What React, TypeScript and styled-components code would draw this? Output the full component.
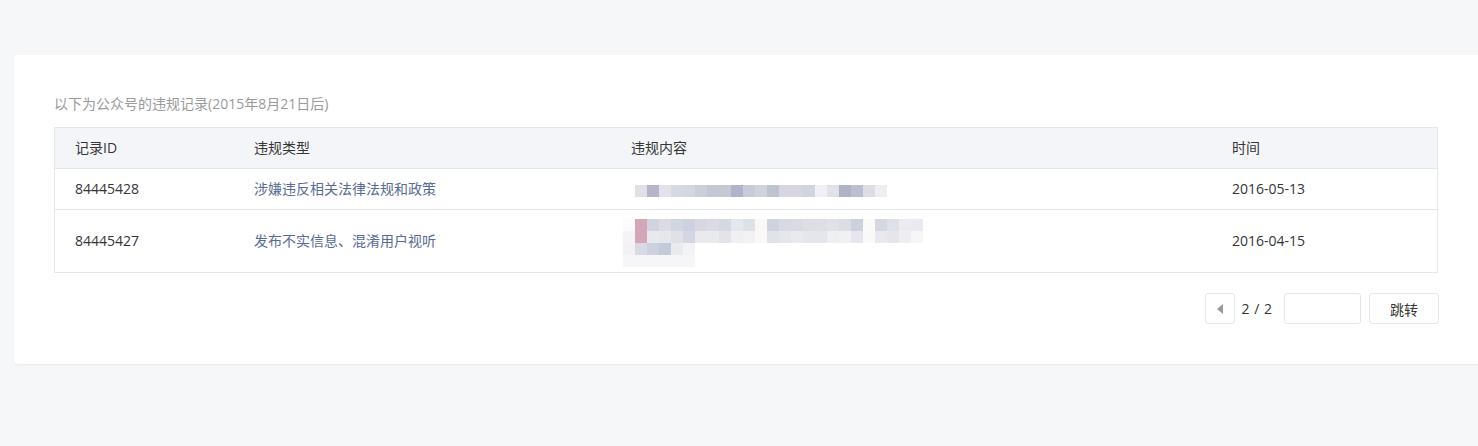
import React, { type FC } from 'react'
import styled, { createGlobalStyle } from 'styled-components'

const GlobalStyle = createGlobalStyle`
  html, body {
    margin: 0;
    padding: 0;
    background: #f6f7f9;
    overflow: hidden;
  }
  body {
    font-family: "Open Sans", "Noto Sans CJK SC", sans-serif;
    font-size: 14px;
    color: #353535;
  }
`

interface ViolationRecord {
  id: string
  type: string
  mosaic: string[][]
  date: string
}

// pixelated (blurred) content, one array per line, one colour per 12px cell
const records: ViolationRecord[] = [
  {
    id: '84445428',
    type: '涉嫌违反相关法律法规和政策',
    mosaic: [
      ['#fff', '#e0e0e6', '#b4b5ca', '#e2e3ea', '#d6d8e3', '#d5d6df', '#cbcfdc', '#c4c8d6', '#c5c9d3', '#afb4ca', '#c9cbd8', '#d1d3db', '#bdc4d1', '#d5d6e0', '#d5d6e0', '#d1d3de', '#f0f1f5', '#e2e1e7', '#afb2c7', '#bbc0d1', '#dcdde5', '#eeeef2']
    ],
    date: '2016-05-13'
  },
  {
    id: '84445427',
    type: '发布不实信息、混淆用户视听',
    mosaic: [
      ['#fbfbfc', '#d4a7b8', '#d2d3de', '#dadbe3', '#d1d5e1', '#cdd1df', '#d8d8e2', '#dadbe4', '#d6d8e2', '#e5e7ee', '#dfe1e9', '#faf8f6', '#d0d3de', '#d8dae3', '#dadae3', '#dcdde5', '#dedfe6', '#e1e2e9', '#dbdde5', '#cdd1dd', '#fafafa', '#d5d8e2', '#e0e1e8', '#ececf0', '#e9eaef'],
      ['#f4f4f6', '#d4a7b8', '#e8e8ee', '#e6e7ec', '#e0e1e8', '#d3d7e3', '#e9e9ee', '#e9eaee', '#e3e4ea', '#f0f0f4', '#f2f2f5', '#faf9f8', '#e0e3ea', '#e4e6ec', '#e9e9ee', '#e5e6eb', '#e5e6eb', '#eeeff3', '#f1f1f3', '#e6e7ed', '#f9f9f9', '#e8e8ee', '#e5e5eb', '#eeeef2', '#f6f6f8'],
      ['#f2f2f4', '#d8dbe5', '#cdd0dd', '#c5cad8', '#eaebef', '#f3f3f5'],
      ['#f6f6f8', '#f6f6f8', '#f6f6f8', '#f6f6f8', '#f6f6f8', '#f6f6f8']
    ],
    date: '2016-04-15'
  }
]

const App: FC = () => {
  return <Page>
    <GlobalStyle />
    <Card>
      <Caption>以下为公众号的违规记录(2015年8月21日后)</Caption>
      <Table>
        <HeaderRow>
          <Cell>记录ID</Cell>
          <Cell>违规类型</Cell>
          <Cell>违规内容</Cell>
          <Cell>时间</Cell>
        </HeaderRow>
        {records.map((record) => (
          <Row key={record.id}>
            <Cell>{record.id}</Cell>
            <Cell $link>{record.type}</Cell>
            <Cell>
              <Mosaic>
                {record.mosaic.map((line, i) => (
                  <MosaicLine key={i}>
                    {line.map((color, j) => <MosaicCell key={j} $color={color} />)}
                  </MosaicLine>
                ))}
              </Mosaic>
            </Cell>
            <Cell>{record.date}</Cell>
          </Row>
        ))}
      </Table>
      <Pager>
        <PrevButton type="button" aria-label="上一页">
          <svg width="8" height="10" viewBox="0 0 8 10">
            <path d="M7 0 L1 5 L7 10 Z" fill="#9a9a9a" />
          </svg>
        </PrevButton>
        <PageNum>2 / 2</PageNum>
        <PageInput type="text" />
        <JumpButton type="button">跳转</JumpButton>
      </Pager>
    </Card>
  </Page>
}

const Page = styled.div`
  padding: 55px 0 80px 14px;
`

const Card = styled.div`
  background: #fff;
  border-radius: 4px 0 0 4px;
  box-shadow: 0 1px 2px rgba(0, 0, 0, 0.05);
  padding: 39px 40px 40px 40px;
  margin-right: -4px;
`

const Caption = styled.p`
  margin: 0 0 13px;
  line-height: 20px;
  color: #9a9a9a;
`

const Table = styled.div`
  border: 1px solid #e4e8eb;
  width: 1382px;
`

const HeaderRow = styled.div`
  display: grid;
  grid-template-columns: 179px 377px 601px 1fr;
  align-items: center;
  height: 40px;
  background: #f4f5f9;
  border-bottom: 1px solid #e4e8eb;
`

const Row = styled.div`
  display: grid;
  grid-template-columns: 179px 377px 601px 1fr;
  align-items: center;
  min-height: 40px;
  border-bottom: 1px solid #e4e8eb;
  &:last-child {
    border-bottom: none;
  }
`

const Cell = styled.div<{ $link?: boolean }>`
  padding: 0 20px;
  line-height: 20px;
  color: ${({ $link }) => ($link ? '#576b95' : '#353535')};
`

const Mosaic = styled.div`
  display: flex;
  flex-direction: column;
  padding: 9px 0 5px;
  margin-left: -8px;
`

const MosaicLine = styled.div`
  display: flex;
  height: 12px;
`

const MosaicCell = styled.span<{ $color: string }>`
  width: 12px;
  height: 12px;
  background: ${({ $color }) => $color};
`

const Pager = styled.div`
  display: flex;
  justify-content: flex-end;
  align-items: center;
  margin-top: 20px;
  width: 1385px;
`

const PrevButton = styled.button`
  display: flex;
  align-items: center;
  justify-content: center;
  width: 30px;
  height: 31px;
  padding: 0;
  background: #fff;
  border: 1px solid #e4e8eb;
  border-radius: 3px;
`

const PageNum = styled.span`
  margin: 0 12px 0 7px;
  font-size: 14px;
  word-spacing: 1px;
  color: #353535;
`

const PageInput = styled.input`
  box-sizing: border-box;
  width: 77px;
  height: 31px;
  border: 1px solid #e4e8eb;
  border-radius: 3px;
  outline: none;
`

const JumpButton = styled.button`
  box-sizing: border-box;
  width: 70px;
  height: 31px;
  margin-left: 8px;
  background: #fff;
  border: 1px solid #e4e8eb;
  border-radius: 3px;
  font-family: "Noto Sans CJK SC", sans-serif;
  font-size: 14px;
  color: #353535;
`

export default App
